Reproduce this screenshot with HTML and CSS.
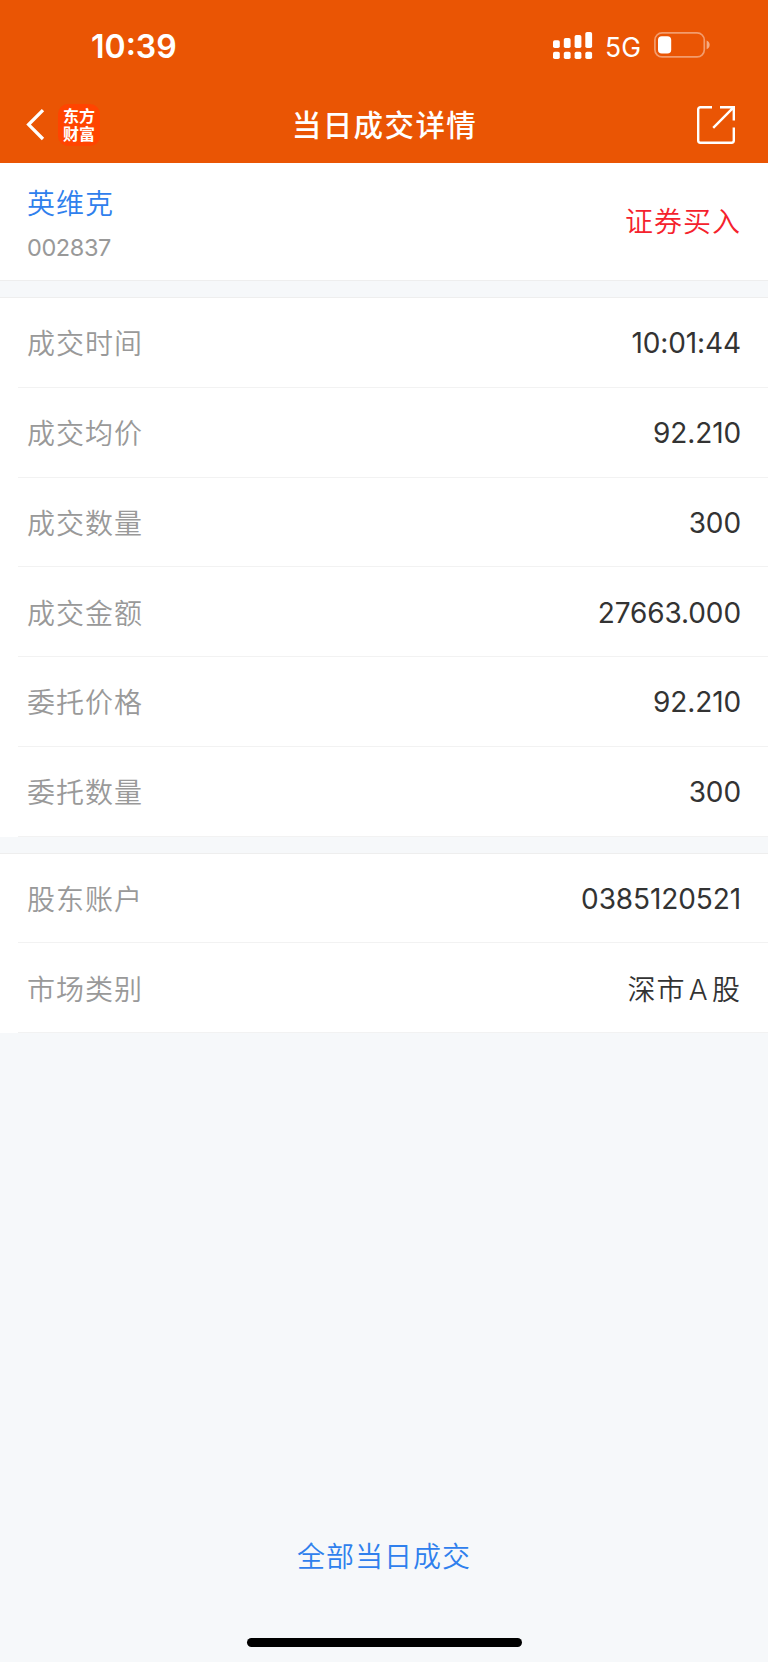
FILE: index.html
```
<!DOCTYPE html>
<html lang="zh-CN">
<head>
  <meta charset="UTF-8" />
  <meta name="viewport" content="width=device-width, initial-scale=1.0">
  <title>当日成交详情</title>
  <link rel="stylesheet" href="styles.css">
</head>
<body>

  <header class="header">
    <div class="status-bar">
      <span class="time">10:39</span>
      <div class="status-icons">
        <svg class="signal" width="40" height="28" viewBox="0 0 40 28" fill="#fff">
          <rect x="0" y="8.3" width="6.8" height="7.8" rx="1.8" />
          <rect x="10.8" y="6" width="6.8" height="10.1" rx="1.8" />
          <rect x="21.6" y="3" width="6.8" height="13.1" rx="1.8" />
          <rect x="32.3" y="0" width="6.8" height="16.1" rx="1.8" />
          <rect x="0" y="19.7" width="6.8" height="7.4" rx="1.8" />
          <rect x="10.8" y="19.7" width="6.8" height="7.4" rx="1.8" />
          <rect x="21.6" y="19.7" width="6.8" height="7.4" rx="1.8" />
          <rect x="32.3" y="19.7" width="6.8" height="7.4" rx="1.8" />
        </svg>
        <span class="network">5G</span>
        <svg class="battery" width="57" height="26" viewBox="0 0 57 26">
          <rect x="0.9" y="0.9" width="49.4" height="24" rx="7.2" fill="none" stroke="#fff" stroke-opacity="0.42" stroke-width="1.7" />
          <path d="M52.6 8.6c4.1 1.2 4.1 7.4 0 8.6z" fill="#fff" fill-opacity="0.5" />
          <rect x="4" y="4.2" width="13.2" height="17.4" rx="3.8" fill="#fff" />
        </svg>
      </div>
    </div>

    <div class="nav-bar">
      <div class="nav-left">
        <svg class="back" width="19" height="32" viewBox="0 0 19 32" fill="none" stroke="#fff" stroke-width="3.3">
          <path d="M17 1.2 2.6 15.6 17 30" />
        </svg>
        <span class="logo">东方<br>财富</span>
      </div>
      <h1 class="title">当日成交详情</h1>
      <svg class="share" width="40" height="40" viewBox="0 0 40 40" fill="none" stroke="#fff" stroke-width="2.4">
        <path d="M16 2.2H4.4A2.2 2.2 0 0 0 2.2 4.4V35.6a2.2 2.2 0 0 0 2.2 2.2H35.6a2.2 2.2 0 0 0 2.2-2.2V22.4" />
        <path d="M24 2.2H37.8V15.6M37.8 2.2 17.2 22.8" />
      </svg>
    </div>
  </header>

  <section class="stock">
    <div>
      <div class="stock-name">英维克</div>
      <div class="stock-code">002837</div>
    </div>
    <span class="direction">证券买入</span>
  </section>

  <section class="list">
    <div class="row"><span class="label">成交时间</span><span class="value">10:01:44</span></div>
    <div class="row"><span class="label">成交均价</span><span class="value">92.210</span></div>
    <div class="row"><span class="label">成交数量</span><span class="value">300</span></div>
    <div class="row"><span class="label">成交金额</span><span class="value">27663.000</span></div>
    <div class="row"><span class="label">委托价格</span><span class="value">92.210</span></div>
    <div class="row"><span class="label">委托数量</span><span class="value">300</span></div>
  </section>

  <section class="list">
    <div class="row"><span class="label">股东账户</span><span class="value">0385120521</span></div>
    <div class="row"><span class="label">市场类别</span><span class="value market">深市 A 股</span></div>
  </section>

  <footer class="footer">
    <a class="all-link">全部当日成交</a>
    <div class="home-bar"></div>
  </footer>

</body>
</html>
```
FILE: styles.css
```
* {
  box-sizing: border-box;
}

body {
  margin: 0;
  height: 1662px;
  display: flex;
  flex-direction: column;
  font-family: Inter, "Noto Sans CJK SC", sans-serif;
  font-weight: 350;
  background: #f6f8fa;
  color: #333;
}

/* Header */
.header {
  height: 163px;
  background: #ea5504;
  color: #fff;
}

.status-bar {
  display: flex;
  justify-content: space-between;
  height: 86px;
  padding: 32px 57px 0 91px;
}

.time {
  font-size: 32px;
  font-weight: 600;
  line-height: 30px;
}

.status-icons {
  display: flex;
  align-items: flex-start;
}

.network {
  margin: 1px 13px 0 12px;
  font-size: 26.5px;
  font-weight: 400;
  line-height: 29px;
}

.nav-bar {
  display: grid;
  grid-template-columns: 1fr auto 1fr;
  align-items: center;
  height: 77px;
  padding: 0 32px 0 26px;
}

.nav-left {
  display: flex;
  align-items: center;
  gap: 13px;
}

.logo {
  width: 42px;
  height: 42px;
  padding-top: 2px;
  border-radius: 10px;
  background: #ff4400;
  font-family: "Noto Sans CJK SC", sans-serif;
  font-size: 16px;
  font-weight: 700;
  line-height: 18px;
  text-align: center;
}

.title {
  margin: 0;
  padding: 0 0 4px 7px;
  font-size: 29.5px;
  font-weight: 500;
  letter-spacing: 1.4px;
}

.share {
  justify-self: end;
}

/* Stock summary */
.stock {
  display: flex;
  justify-content: space-between;
  align-items: center;
  height: 118px;
  padding: 5px 27px 0 27px;
  background: #fff;
  border-bottom: 1px solid #eee;
}

.stock-name {
  font-size: 28px;
  line-height: 40px;
  letter-spacing: 1px;
  color: #2f80ed;
}

.stock-code {
  margin-top: 8px;
  font-size: 23.5px;
  font-weight: 400;
  line-height: 32px;
  letter-spacing: -0.4px;
  color: #999;
}

.direction {
  padding-bottom: 8px;
  font-size: 28px;
  letter-spacing: 1px;
  color: #f5222d;
}

/* Detail rows */
.list {
  margin-top: 16px;
  padding-left: 18px;
  background: #fff;
  border-top: 1px solid #eee;
}

.row {
  display: flex;
  justify-content: space-between;
  align-items: center;
  height: 89.75px;
  padding: 0 27px 0 9px;
  border-bottom: 1px solid #f2f2f2;
}

.label {
  font-size: 28px;
  letter-spacing: 1px;
  color: #999;
}

.value {
  padding-top: 2px;
  font-size: 28px;
  font-weight: 400;
  letter-spacing: -0.1px;
}

.market {
  padding: 0;
  font-weight: 350;
  letter-spacing: 1px;
  word-spacing: -5.5px;
}

/* Bottom */
.footer {
  flex: 1;
  display: flex;
  flex-direction: column;
  justify-content: flex-end;
  align-items: center;
}

.all-link {
  font-size: 28px;
  line-height: 40px;
  letter-spacing: 1px;
  color: #2f80ed;
}

.home-bar {
  width: 275px;
  height: 9px;
  margin: 61px 0 15px;
  border-radius: 5px;
  background: #000;
}
```
